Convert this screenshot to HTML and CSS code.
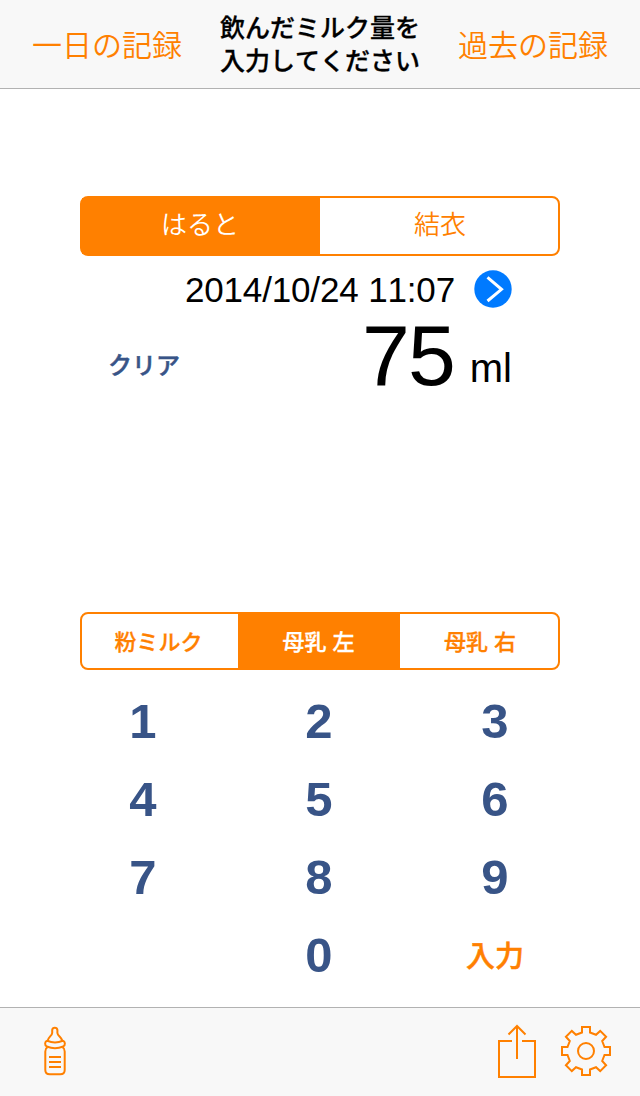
FILE: index.html
```html
<!DOCTYPE html>
<html lang="ja">
<head>
<meta charset="utf-8">
<title>ミルク量の入力</title>
<link rel="stylesheet" href="styles.css">
</head>
<body>
<div class="screen">
  <header class="navbar">
    <a class="nav-link">一日の記録</a>
    <h1 class="nav-title">飲んだミルク量を<br>入力してください</h1>
    <a class="nav-link">過去の記録</a>
  </header>
  <main class="content">
    <div class="segments segments-child">
      <div class="segment selected">はると</div>
      <div class="segment">結衣</div>
    </div>
    <div class="date-row">
      <span class="date">2014/10/24 11:07</span>
      <svg class="date-next" width="38" height="38" viewBox="0 0 38 38"><circle cx="19" cy="19" r="18.7" fill="#007aff"/><path d="M13.500 7.300 27.500 19.300 13.500 31" fill="none" stroke="#fff" stroke-width="3"/></svg>
    </div>
    <div class="amount-row">
      <span class="clear">クリア</span>
      <span class="amount">75</span>
      <span class="unit">ml</span>
    </div>
    <div class="segments segments-kind">
      <div class="segment">粉ミルク</div>
      <div class="segment selected">母乳 左</div>
      <div class="segment">母乳 右</div>
    </div>
    <div class="keypad">
      <span class="key">1</span><span class="key">2</span><span class="key">3</span>
      <span class="key">4</span><span class="key">5</span><span class="key">6</span>
      <span class="key">7</span><span class="key">8</span><span class="key">9</span>
      <span class="key"></span><span class="key">0</span><span class="key enter">入力</span>
    </div>
  </main>
  <footer class="toolbar">
    <svg class="icon" width="24" height="50" viewBox="0 0 24 50">
      <path d="M4.600 15C5 11 9 10 9.200 7V4Q9.500 1.700 11.800 1.700T14.400 4V7C14.600 10 18.600 11 19.400 15"/>
      <path d="M4.200 14.800C1.700 15.500 1.300 19 3.800 20.500Q12 23.800 20.200 20.500C22.700 19 22.300 15.500 19.800 14.800Q12 18 4.200 14.800Z"/>
      <path d="M4.500 21.200Q2.300 22.500 2.300 25.500V44Q2.300 48.300 6.800 48.300H17.200Q21.700 48.300 21.700 44V25.500Q21.700 22.500 19.500 21.200"/>
      <path d="M6 31H18M6 36H18M6 41H18"/>
    </svg>
    <div class="toolbar-end">
      <svg class="icon" width="40" height="54" viewBox="0 0 40 54"><path d="M15 17H2V53H38V17H25M20 35V3M11.500 10.500 20 2 28.500 10.500"/></svg>
      <svg class="icon" width="52" height="52" viewBox="-26 -26 52 52"><path d="M-4-24H4V-18.500L10-16.200 14.200-20.100 20.100-14.200 16.200-10 18.500-4H24V4H18.500L16.200 10 20.100 14.200 14.200 20.100 10 16.200 4 18.500V24H-4V18.500L-10 16.200-14.200 20.100-20.100 14.200-16.200 10-18.500 4H-24V-4H-18.500L-16.200-10-20.100-14.200-14.200-20.100-10-16.200-4-18.500Z"/><circle r="8"/></svg>
    </div>
  </footer>
</div>
</body>
</html>
```

FILE: styles.css
```css
* { box-sizing: border-box; }
body {
  margin: 0;
  background: #fff;
  color: #000;
  font-family: "Liberation Sans", "Noto Sans CJK JP", sans-serif;
  font-kerning: none;
}
.screen { display: flex; flex-direction: column; height: 1096px; }
.navbar {
  display: flex;
  align-items: center;
  justify-content: space-between;
  height: 89px;
  padding: 2px 32px 0;
  background: #f8f8f8;
  border-bottom: 1px solid #b2b2b2;
}
.nav-link { padding-top: 2px; font-size: 30px; font-weight: 350; line-height: 44px; color: #ff8000; }
.nav-title {
  margin: 0;
  font-size: 25px;
  font-weight: 500;
  line-height: 33px;
  text-align: center;
  -webkit-text-stroke: 0.3px;
}
.content { flex: 1; padding: 107px 0 0; }
.segments {
  display: flex;
  width: 480px;
  margin: 0 auto;
  border: 2px solid #ff8000;
  border-radius: 8px;
  color: #ff8000;
}
.segment { flex: 1; text-align: center; }
.selected { background: #ff8000; color: #fff; }
.segments-child { height: 60px; font-size: 26px; font-weight: 350; line-height: 54px; }
.segments-child .selected { padding-right: 2px; }
.segments-child .segment:last-child { padding-left: 2px; }
.segments-kind {
  height: 58px;
  margin-top: 212px;
  font-size: 22px;
  font-weight: 500;
  line-height: 58px;
  -webkit-text-stroke: 0.3px;
}
.segments-kind .segment { flex: 0 0 156px; height: 54px; padding-right: 3px; }
.segments-kind .selected { flex-basis: 162px; padding-right: 1px; }
.segments-kind .segment:last-child { flex-basis: 158px; padding: 0 0 0 2px; }
.date-row {
  display: flex;
  align-items: center;
  justify-content: flex-end;
  gap: 19px;
  height: 66px;
  padding-right: 128px;
}
.date { padding-top: 2px; font-size: 35px; letter-spacing: -0.15px; }
.amount-row {
  display: flex;
  align-items: flex-start;
  height: 78px;
  padding: 0 128px 0 108px;
}
.clear { font-size: 24px; font-weight: 500; line-height: 88px; color: #385487; -webkit-text-stroke: 0.5px; }
.amount { margin-left: auto; font-size: 86px; line-height: 67px; letter-spacing: -2px; }
.unit { margin-left: 16px; font-size: 40px; line-height: 92px; }
.keypad {
  display: grid;
  grid-template-columns: repeat(3, 176px);
  grid-auto-rows: 78px;
  justify-content: center;
  margin: 12px 0 0 -2px;
}
.key { text-align: center; font-size: 49px; font-weight: 700; line-height: 79px; color: #385487; }
.enter { font-size: 29px; font-weight: 500; line-height: 83px; color: #ff8000; -webkit-text-stroke: 0.5px; }
.toolbar {
  display: flex;
  align-items: center;
  justify-content: space-between;
  height: 89px;
  padding: 0 28px 2px 43px;
  background: #f8f8f8;
  border-top: 1px solid #b2b2b2;
}
.toolbar-end { display: flex; align-items: center; gap: 23px; }
.icon { display: block; fill: none; stroke: #ff8000; stroke-width: 2; }
```
